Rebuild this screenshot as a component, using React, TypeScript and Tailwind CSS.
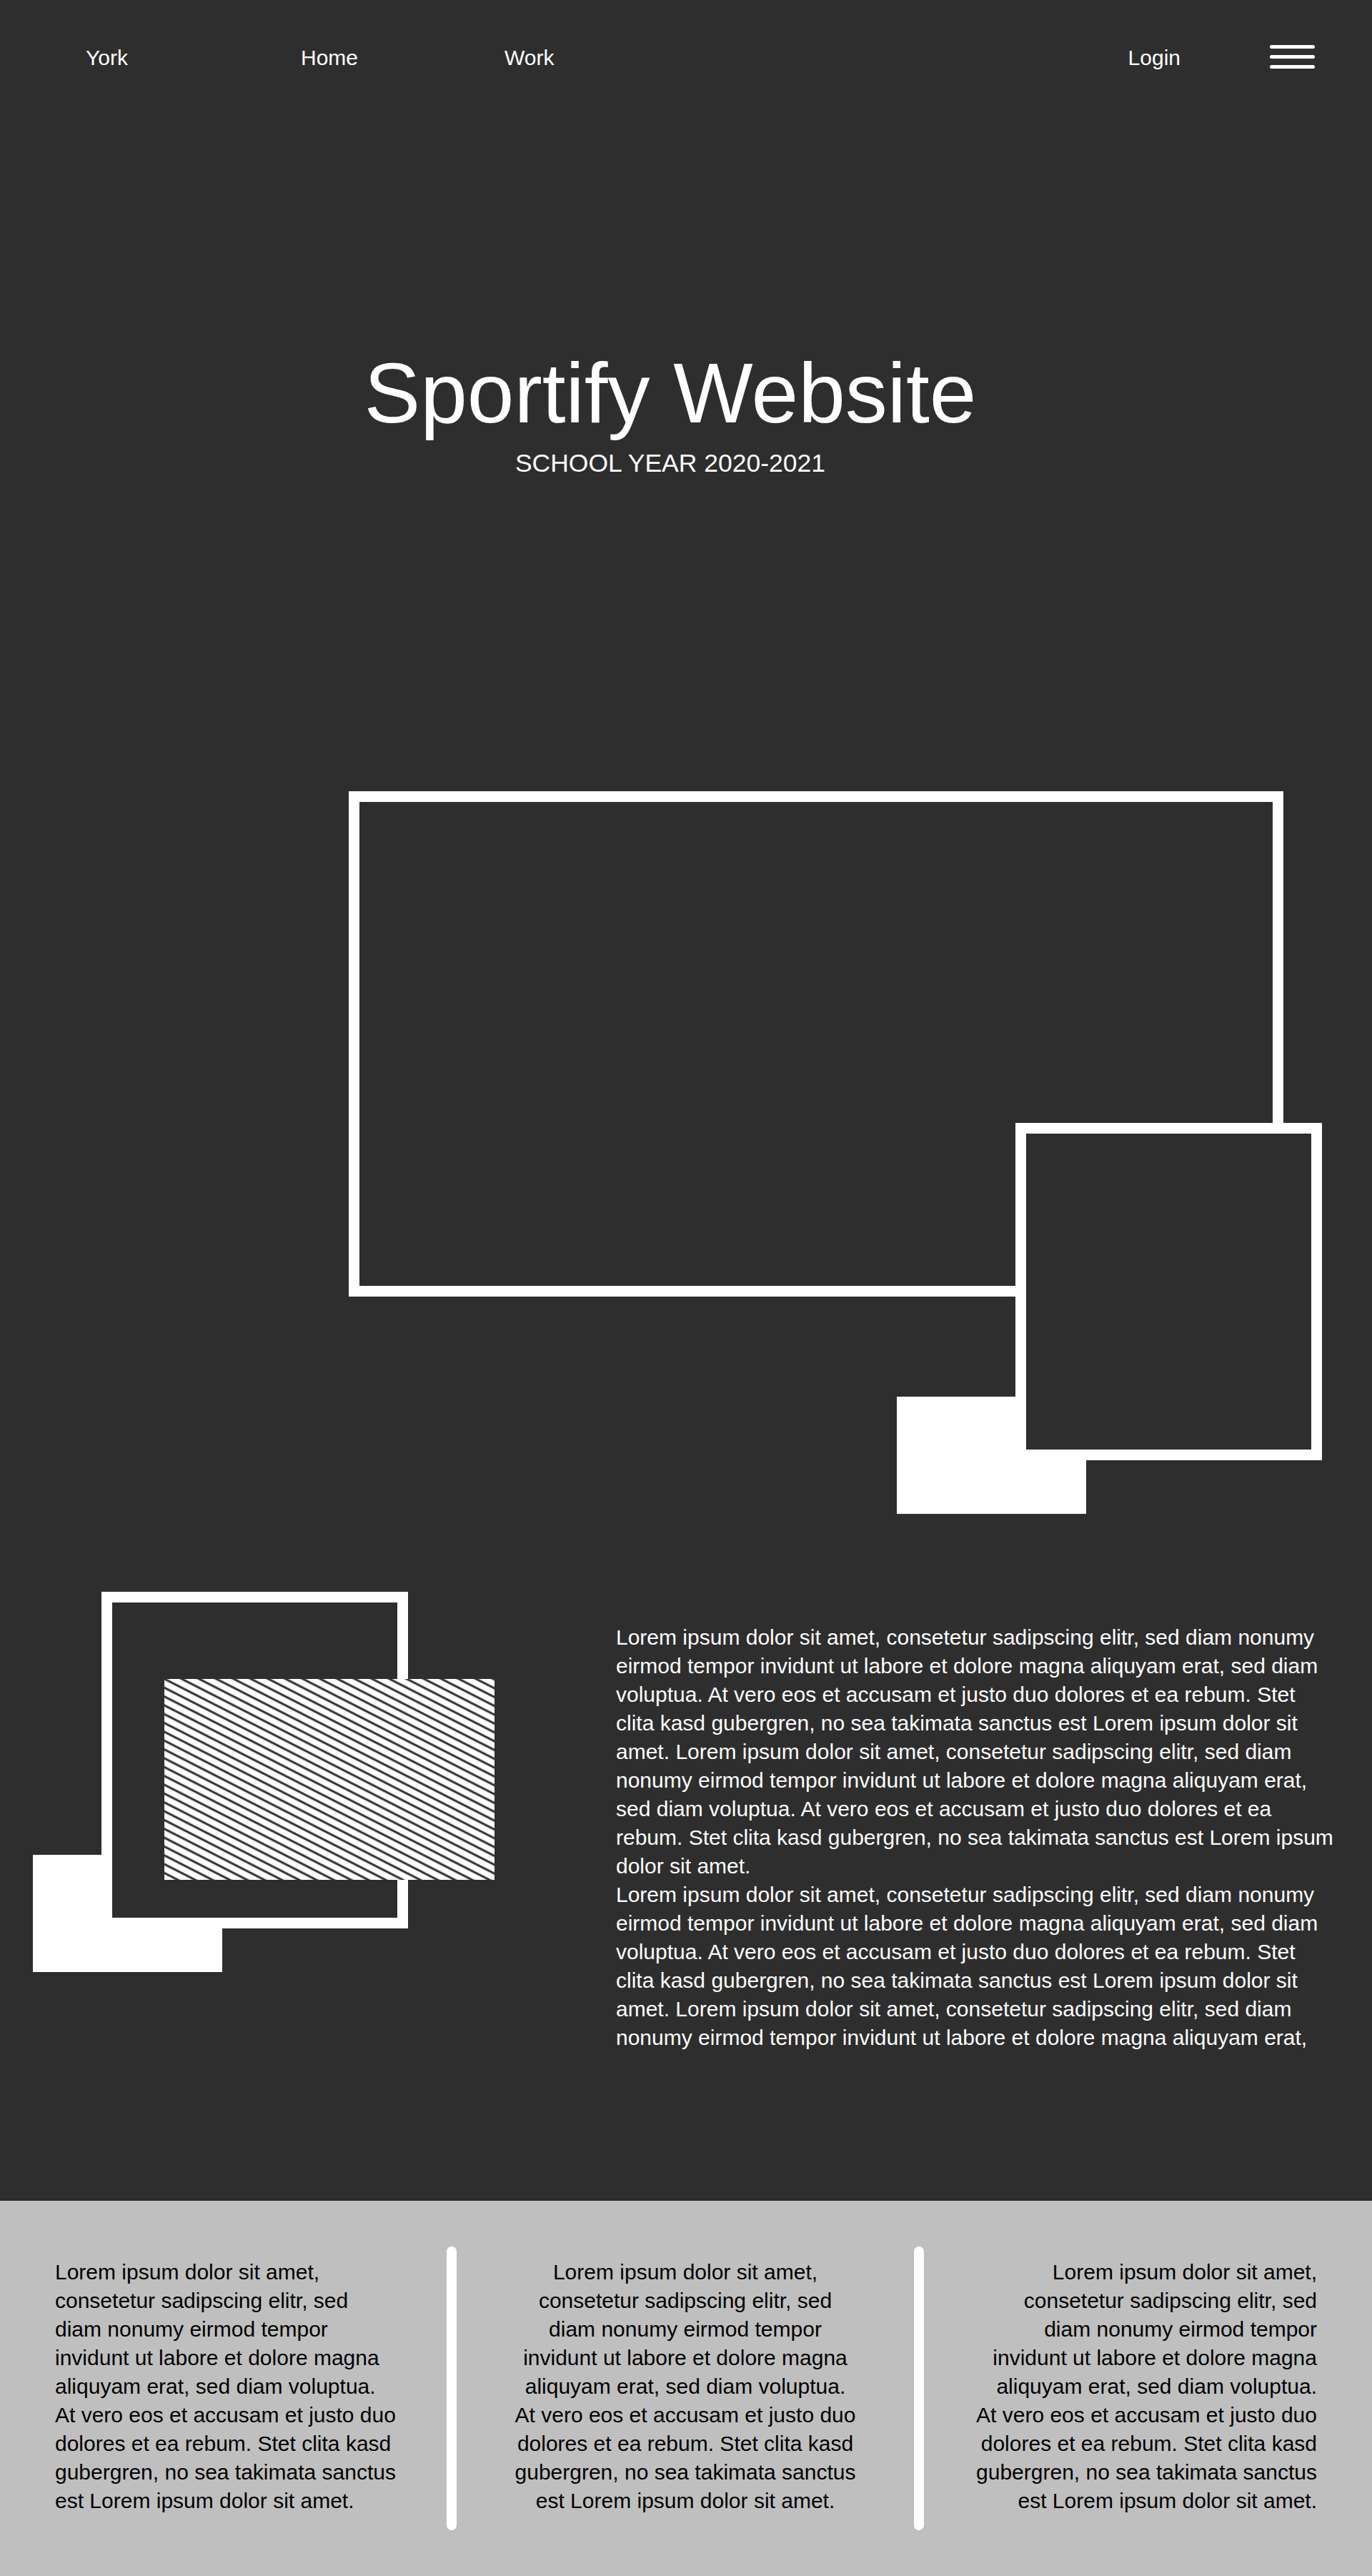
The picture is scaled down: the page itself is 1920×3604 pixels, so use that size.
const lorem =
  'Lorem ipsum dolor sit amet, consetetur sadipscing elitr, sed diam nonumy eirmod tempor invidunt ut labore et dolore magna aliquyam erat, sed diam voluptua. At vero eos et accusam et justo duo dolores et ea rebum. Stet clita kasd gubergren, no sea takimata sanctus est Lorem ipsum dolor sit amet.';

const Nav = () => (
  <nav className="flex items-start h-[101px] pt-[61px] pl-[120px] pr-[80px] text-white text-[30px] leading-[40px]">
    <a className="w-[60px]">York</a>
    <a className="ml-[241px]">Home</a>
    <a className="ml-[205px]">Work</a>
    <a className="ml-auto">Login</a>
    <button className="ml-[125px] mt-[2px] flex flex-col gap-[9px]" aria-label="Menu">
      <span className="block w-[63px] h-[5px] rounded-full bg-white" />
      <span className="block w-[63px] h-[5px] rounded-full bg-white" />
      <span className="block w-[63px] h-[5px] rounded-full bg-white" />
    </button>
  </nav>
);

const Hero = () => (
  <header className="h-[999px] pt-[390px] pr-[44px] flex flex-col items-center text-white">
    <h1 className="text-[118px] leading-[118px] font-normal">Sportify Website</h1>
    <p className="mt-[18px] text-[35.5px] leading-[42px]">SCHOOL YEAR 2020-2021</p>
  </header>
);

const FrameComposition = () => (
  <section className="relative h-[1030px]">
    <div className="absolute left-[488px] top-[7px] w-[1308px] h-[707px] border-[15px] border-white" />
    <div className="absolute left-[1255px] top-[854px] w-[265px] h-[164px] bg-white" />
    <div className="absolute left-[1421px] top-[471px] w-[429px] h-[472px] border-[15px] border-white bg-[#2e2e2e]" />
  </section>
);

const AboutSection = () => (
  <section className="flex items-start h-[949px]">
    <div className="relative w-[700px] h-full shrink-0">
      <div className="absolute left-[46px] top-[465px] w-[265px] h-[164px] bg-white" />
      <div className="absolute left-[142px] top-[97px] w-[429px] h-[471px] border-[15px] border-white bg-[#2e2e2e]" />
      <div className="absolute left-[230px] top-[219px] w-[462px] h-[281px] bg-[repeating-linear-gradient(27deg,#ffffff_0px,#ffffff_6px,#2b2b2b_8px,#2b2b2b_9px,#ffffff_11px)]" />
    </div>
    <div className="ml-[162px] mt-[141px] w-[1008px] text-white text-[30px] leading-[40px]">
      <p>
        {lorem} {lorem}
      </p>
      <p>
        {lorem} Lorem ipsum dolor sit amet, consetetur sadipscing elitr, sed diam nonumy eirmod tempor invidunt ut
        labore et dolore magna aliquyam erat,
      </p>
    </div>
  </section>
);

const Divider = ({ className }: { className: string }) => (
  <div className={`w-[14px] h-[397px] rounded-full bg-white shrink-0 ${className}`} />
);

const Footer = () => (
  <footer className="flex items-start h-[525px] bg-[#bfbfbf] text-black text-[30px] leading-[40px]">
    <p className="ml-[77px] mt-[80px] w-[480px] shrink-0 text-left">{lorem}</p>
    <Divider className="ml-[68px] mt-[64px]" />
    <p className="ml-[80px] mt-[80px] w-[480px] shrink-0 text-center">{lorem}</p>
    <Divider className="ml-[80px] mt-[64px]" />
    <p className="ml-[70px] mt-[80px] w-[480px] shrink-0 text-right">{lorem}</p>
  </footer>
);

export default function App() {
  return (
    <div className="w-[1920px] h-[3604px] flex flex-col bg-[#2e2e2e] font-['Liberation_Sans',Arial,sans-serif] overflow-hidden">
      <Nav />
      <Hero />
      <FrameComposition />
      <AboutSection />
      <Footer />
    </div>
  );
}
